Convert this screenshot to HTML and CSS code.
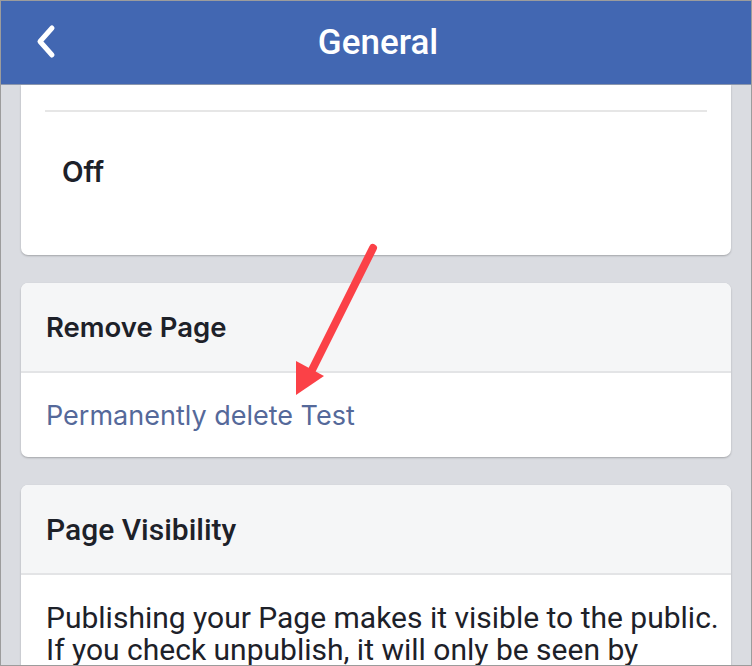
FILE: index.html
```html
<!DOCTYPE html>
<html>
	<head>
		<meta charset="utf-8">
		<title>General</title>
		<link rel="stylesheet" href="styles.css">
	</head>
	<body>
		<div class="screen">
			<div class="topbar">
				<svg class="back" width="24" height="36" viewBox="0 0 24 36">
					<polyline points="17,5 5,18.5 17,32" fill="none" stroke="#fff" stroke-width="5" stroke-linecap="round" stroke-linejoin="round"/>
				</svg>
				<div class="title">General</div>
			</div>
			<div class="content">
				<div class="card card-first">
					<div class="rule"></div>
					<div class="value">Off</div>
				</div>
				<div class="card">
					<div class="card-head">Remove Page</div>
					<div class="card-body">
						<a class="link">Permanently delete Test</a>
					</div>
				</div>
				<div class="card">
					<div class="card-head narrow">Page Visibility</div>
					<div class="card-text">Publishing your Page makes it visible to the public. If you check unpublish, it will only be seen by admins.</div>
				</div>
			</div>
			<!-- red pointer drawn over the page -->
			<svg class="pointer" width="752" height="666" viewBox="0 0 752 666">
				<line x1="373" y1="248" x2="311" y2="372" stroke="#fb4147" stroke-width="8" stroke-linecap="round"/>
				<polygon points="296,395 296,361 324,376" fill="#fb4147"/>
			</svg>
		</div>
	</body>
</html>
```

FILE: styles.css
```css
*{
	margin:0;
	padding:0;
}
body{
	background:#fff;
}
.screen{
	position:relative;
	box-sizing:border-box;
	width:752px;
	height:666px;
	border:1px solid #9c9c9c;
	background:#dadce1;
	overflow:hidden;
	font-family:Inter, "Noto Sans", sans-serif;
}
.topbar{
	position:relative;
	height:83px;
	background:#4267b2;
	display:flex;
	align-items:center;
	justify-content:center;
	border-bottom:1px solid #8a96ad;
}
.back{
	position:absolute;
	left:34px;
	top:22px;
}
.title{
	color:#fff;
	font-family:Roboto, sans-serif;
	font-size:35px;
	font-weight:500;
	margin-left:4px;
}
.content{
	padding:0 20px;
	display:flex;
	flex-direction:column;
	gap:28px;
}
.card{
	background:#fff;
	border-radius:7px;
	box-shadow:0 1px 2px rgba(0,0,0,.25);
	overflow:hidden;
}
.card-first{
	border-radius:0 0 7px 7px;
	height:170px;
	padding-top:25px;
	box-sizing:border-box;
}
.rule{
	height:2px;
	background:#e6e6e6;
	margin:0 24px;
}
.value{
	padding:43px 0 0 41px;
	font-size:28px;
	font-weight:600;
	color:#1d2129;
}
.card-head{
	height:88px;
	background:#f5f6f7;
	border-bottom:2px solid #e3e4e6;
	display:flex;
	align-items:center;
	padding-left:25px;
	font-size:27.5px;
	font-weight:600;
	color:#1d2129;
}
.card-head.narrow{
	font-family:Roboto, sans-serif;
	font-weight:500;
	font-size:30px;
}
.card-body{
	height:84px;
	display:flex;
	align-items:center;
	padding-left:25px;
}
.link{
	color:#55699a;
	font-size:27px;
}
.card-text{
	padding:27px 10px 20px 25px;
	font-family:Roboto, sans-serif;
	font-size:30px;
	line-height:32px;
	color:#1d2129;
}
.pointer{
	position:absolute;
	left:-1px;
	top:-1px;
}
```
